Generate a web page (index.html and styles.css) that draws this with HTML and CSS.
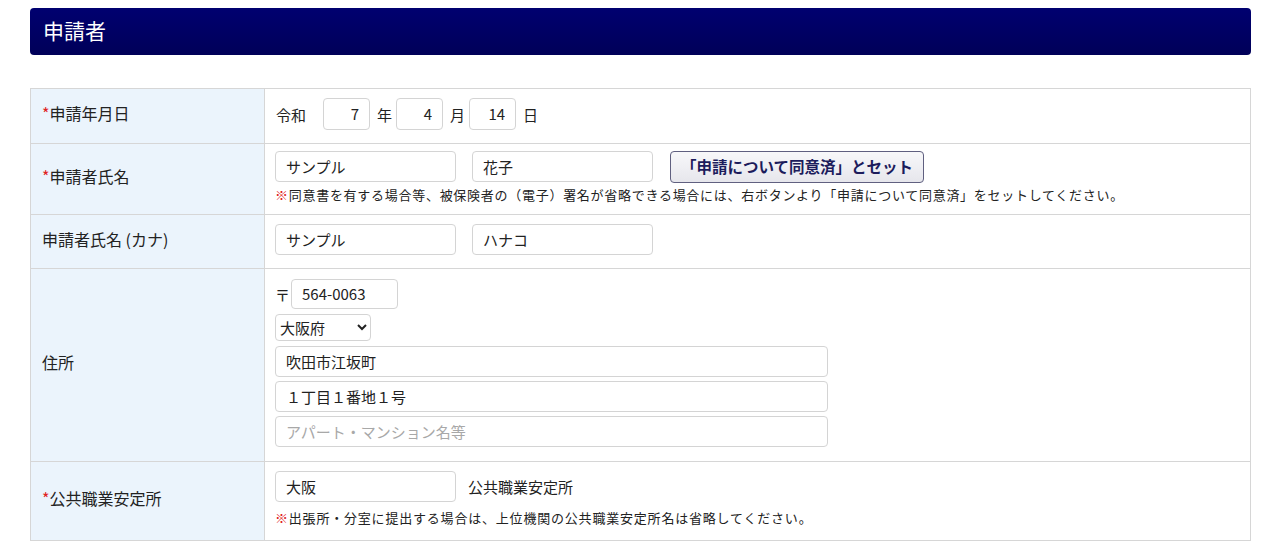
FILE: index.html
```html
<!DOCTYPE html>
<html lang="ja">
<head>
    <meta charset="UTF-8">
    <title>申請者</title>
    <link rel="stylesheet" href="styles.css">
</head>
<body>

    <div class="section">
        <div class="section-title">申請者</div>

        <table class="form-table">
            <tr class="row-date">
                <th><span class="req">*</span>申請年月日</th>
                <td>
                    <div class="line">
                        <span class="unit">令和</span>
                        <input type="text" class="num" value="7">
                        <span class="unit">年</span>
                        <input type="text" class="num" value="4">
                        <span class="unit">月</span>
                        <input type="text" class="num" value="14">
                        <span class="unit">日</span>
                    </div>
                </td>
            </tr>
            <tr class="row-name">
                <th><span class="req">*</span>申請者氏名</th>
                <td>
                    <div class="line">
                        <input type="text" class="name" value="サンプル">
                        <input type="text" class="name" value="花子">
                        <button class="agree-btn">「申請について同意済」とセット</button>
                    </div>
                    <p class="note"><span class="mark">※</span>同意書を有する場合等、被保険者の（電子）署名が省略できる場合には、右ボタンより「申請について同意済」をセットしてください。</p>
                </td>
            </tr>
            <tr class="row-kana">
                <th>申請者氏名 (カナ)</th>
                <td>
                    <div class="line">
                        <input type="text" class="name" value="サンプル">
                        <input type="text" class="name" value="ハナコ">
                    </div>
                </td>
            </tr>
            <tr class="row-addr">
                <th>住所</th>
                <td>
                    <div class="addr">
                        <div class="zip-line">
                            <span class="zip-mark">〒</span>
                            <input type="text" class="zip" value="564-0063">
                        </div>
                        <select class="pref">
                            <option>大阪府</option>
                        </select>
                        <input type="text" class="wide" value="吹田市江坂町">
                        <input type="text" class="wide" value="１丁目１番地１号">
                        <input type="text" class="wide" placeholder="アパート・マンション名等">
                    </div>
                </td>
            </tr>
            <tr class="row-office">
                <th><span class="req">*</span>公共職業安定所</th>
                <td>
                    <div class="line">
                        <input type="text" class="name" value="大阪">
                        <span class="office-suffix">公共職業安定所</span>
                    </div>
                    <p class="note note-office"><span class="mark">※</span>出張所・分室に提出する場合は、上位機関の公共職業安定所名は省略してください。</p>
                </td>
            </tr>
        </table>
    </div>

</body>
</html>
```

FILE: styles.css
```css
body {
    font-family: "Noto Sans CJK JP", "Noto Sans", sans-serif;
    margin: 0;
    padding: 0;
    background-color: #fff;
    color: #222;
    font-size: 15px;
}

.section {
    padding: 8px 29px 0 30px;
}

.section-title {
    background: linear-gradient(#000070, #000058);
    color: white;
    font-size: 21px;
    height: 47px;
    line-height: 45px;
    padding-left: 13px;
    border-radius: 4px;
}

.form-table {
    width: 100%;
    margin-top: 33px;
    border-collapse: collapse;
    border: 1px solid #d6d6d6;
}

.form-table th,
.form-table td {
    border-top: 1px solid #d6d6d6;
    border-bottom: 1px solid #d6d6d6;
    text-align: left;
    vertical-align: middle;
}

.form-table th {
    width: 222px;
    background-color: #ebf4fc;
    font-weight: normal;
    font-size: 16px;
    padding: 0 0 6px 11px;
    border-right: 1px solid #d6d6d6;
}

.form-table td {
    padding: 0 10px 4px;
}

.req {
    color: #e02020;
}

.row-date { height: 55px; }
.row-name { height: 71px; }
.row-kana { height: 54px; }
.row-addr { height: 193px; }
.row-office { height: 79px; }

.line {
    display: flex;
    align-items: center;
}

input {
    font-family: inherit;
    font-size: 15px;
    color: #222;
    border: 1px solid #d4d4d4;
    border-radius: 4px;
    height: 32px;
    box-sizing: border-box;
    padding: 0 10px 1px;
    outline: none;
}

input::placeholder {
    color: #a8a8a8;
}

.unit {
    margin: 0 4px 0 7px;
}

.line .unit:first-child {
    margin-left: 1px;
    margin-right: 17px;
}

.num {
    width: 47px;
    text-align: right;
}

.name {
    width: 181px;
    height: 31px;
    margin-right: 16px;
}

.agree-btn {
    font-family: inherit;
    font-size: 15.5px;
    font-weight: bold;
    color: #1c1c5c;
    background: linear-gradient(#f8f8fa, #e6e6ec);
    border: 1px solid #606080;
    border-radius: 4px;
    height: 32px;
    padding: 0 10px 1px;
    margin-left: 1px;
}

.note {
    margin: 2px 0 0;
    font-size: 13px;
    letter-spacing: 0.72px;
    color: #222;
}

.note .mark {
    color: #e02020;
    font-weight: bold;
}

.addr {
    display: flex;
    flex-direction: column;
    align-items: flex-start;
    gap: 4px;
    padding: 0 0 0;
}

.zip-line {
    display: flex;
    align-items: center;
    margin-bottom: 1px;
}

.zip-mark {
    margin: 0 1px 0 0;
}

.zip {
    width: 107px;
    height: 30px;
}

.pref {
    font-family: inherit;
    font-size: 15px;
    color: #222;
    width: 96px;
    height: 27px;
    border: 1px solid #d4d4d4;
    border-radius: 4px;
    background-color: white;
    margin-bottom: 1px;
}

.wide {
    width: 553px;
    height: 31px;
}

.office-suffix {
    margin-left: -4px;
}

.note-office {
    margin-top: 6px;
    letter-spacing: 0.8px;
}
```
